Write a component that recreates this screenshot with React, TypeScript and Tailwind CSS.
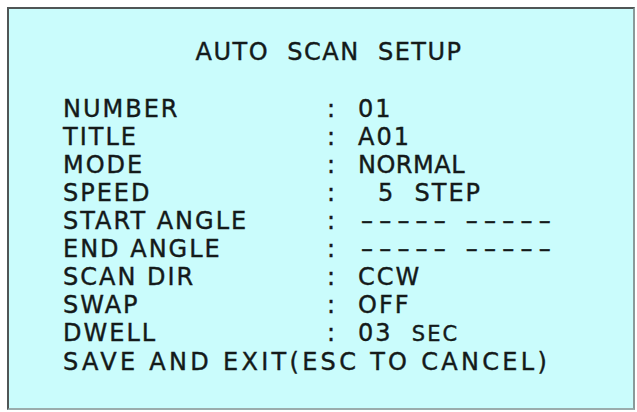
const dashes = "––––– –––––";

const rows: { label: string; value: React.ReactNode }[] = [
  { label: "NUMBER", value: "01" },
  { label: "TITLE", value: "A01" },
  { label: "MODE", value: <span className="tracking-[0.5px]">NORMAL</span> },
  { label: "SPEED", value: <span className="pl-[20px]">5  STEP</span> },
  { label: "START ANGLE", value: <span className="pl-[3px] tracking-[6.2px]">{dashes}</span> },
  { label: "END ANGLE", value: <span className="pl-[3px] tracking-[6.2px]">{dashes}</span> },
  { label: "SCAN DIR", value: "CCW" },
  { label: "SWAP", value: "OFF" },
  {
    label: "DWELL",
    value: (
      <span>
        03  <span className="text-[21px]">SEC</span>
      </span>
    ),
  },
];

function MenuRow({ label, value }: { label: string; value: React.ReactNode }) {
  return (
    <div className="flex">
      <span className="w-[264px] shrink-0">{label}</span>
      <span className="w-[31px] shrink-0">:</span>
      <span className="whitespace-pre">{value}</span>
    </div>
  );
}

export default function App() {
  return (
    <div className="w-[637px] h-[412px] bg-white pt-[7px] pl-[7px] pr-[2px] pb-[2px]">
      <div
        className="h-full flex flex-col bg-[#cafcfc] border-2 border-t-[#505656] border-l-[#505656] border-r-[#8a9a9a] border-b-[#9aacac] text-[#141a1a] text-[24px] leading-[28px] tracking-[2px] [-webkit-text-stroke:0.4px_#141a1a]"
        style={{ fontFamily: '"DejaVu Sans", Verdana, sans-serif' }}
      >
        <div className="pt-[29px] pl-[16px] text-center whitespace-pre tracking-[1.5px]">
          AUTO  SCAN  SETUP
        </div>
        <div className="mt-[29px] pl-[54px] flex flex-col">
          {rows.map((r) => (
            <MenuRow key={r.label} label={r.label} value={r.value} />
          ))}
          <div className="tracking-[3.3px]">SAVE AND EXIT(ESC TO CANCEL)</div>
        </div>
      </div>
    </div>
  );
}
